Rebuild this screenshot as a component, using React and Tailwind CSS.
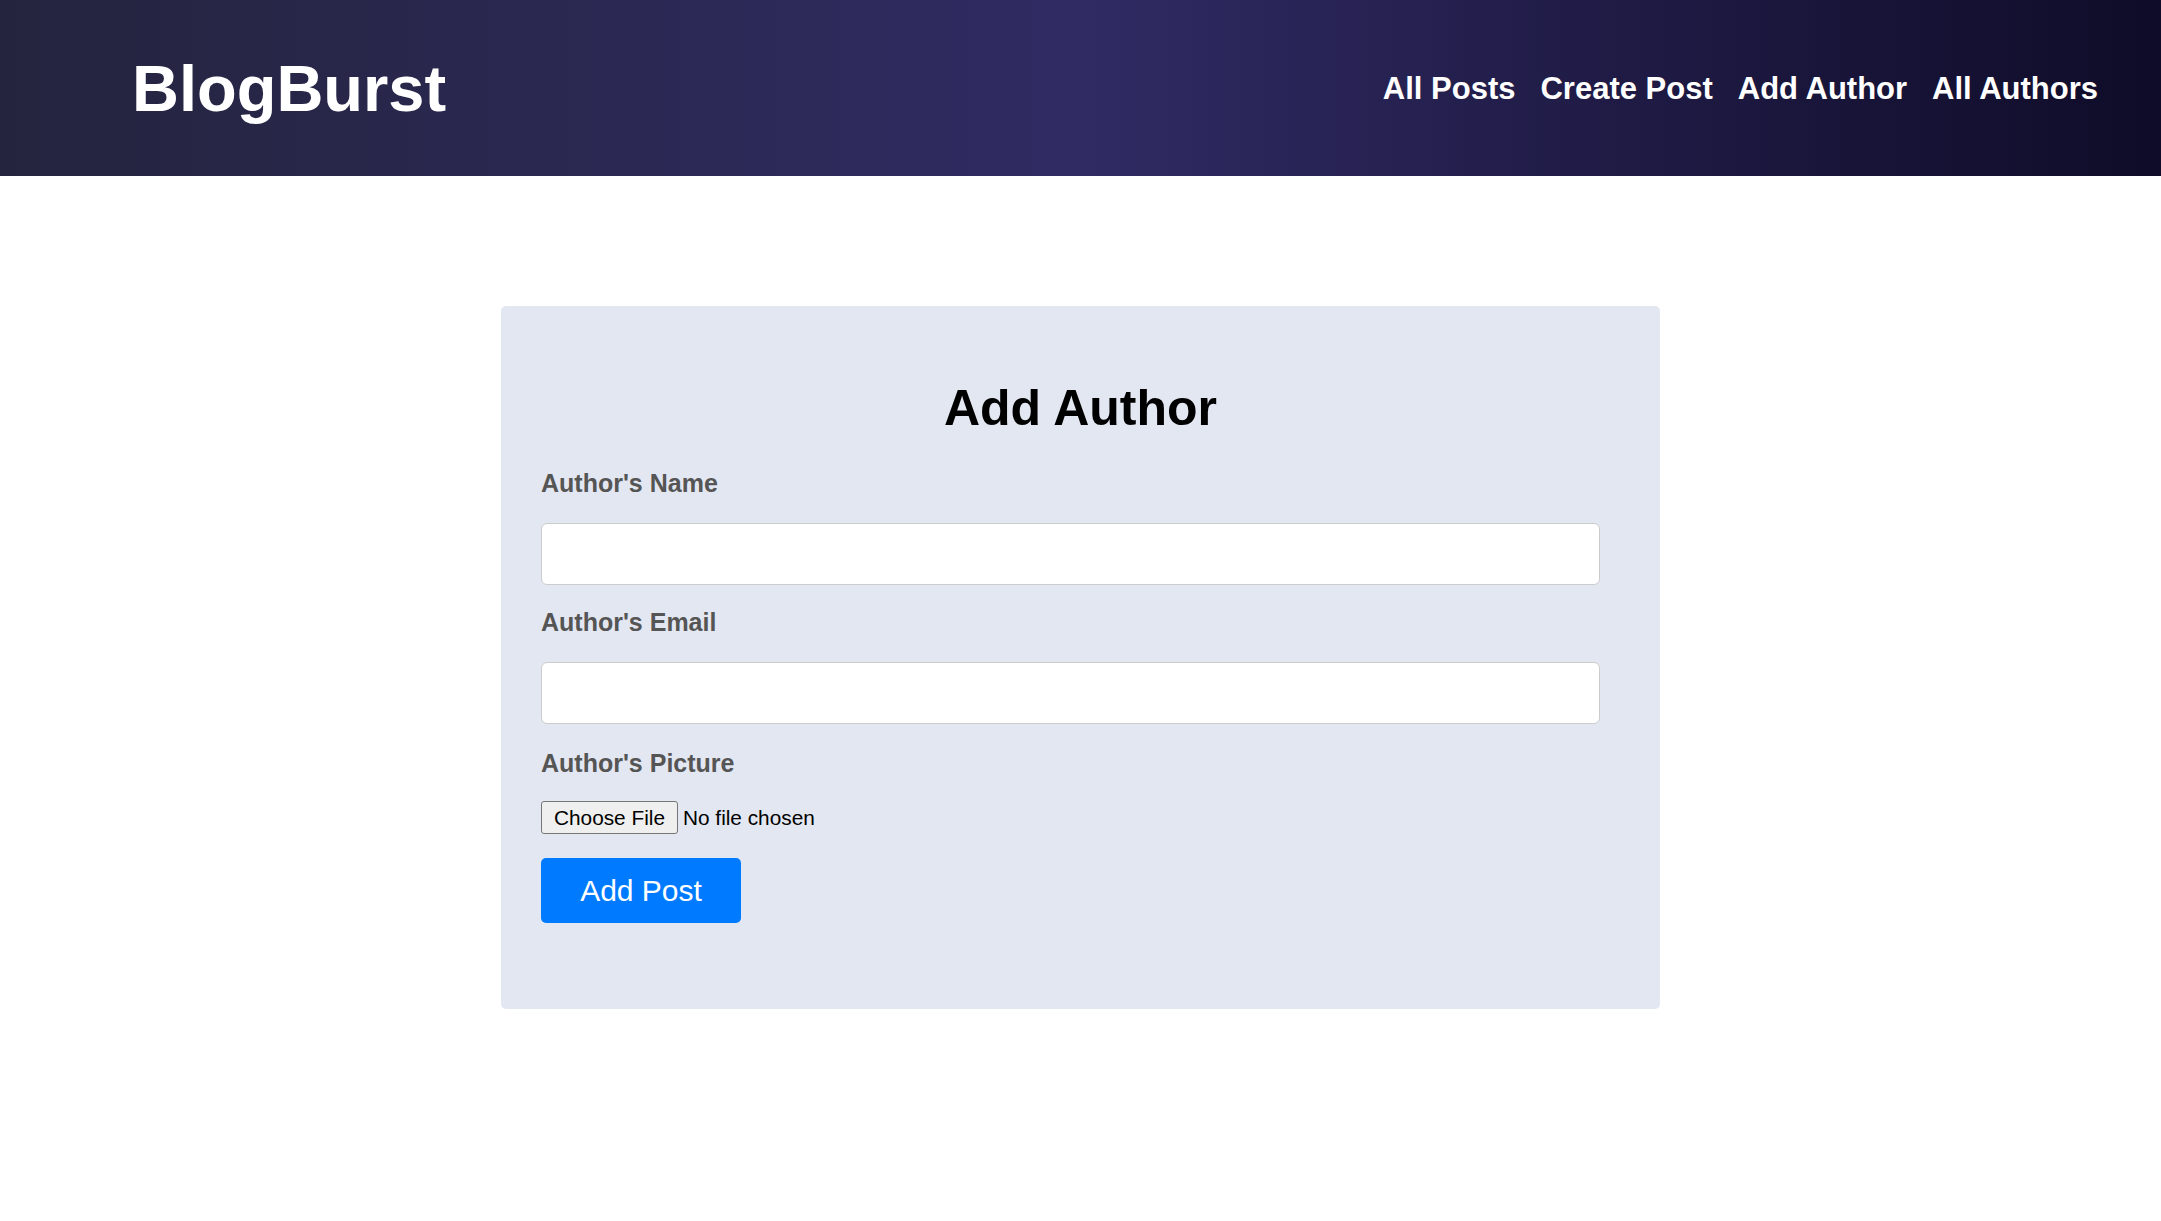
import React, { useState } from "react";

const navLinks = ["All Posts", "Create Post", "Add Author", "All Authors"];

const Header = () => (
  <header className="h-[176px] flex items-center justify-between pl-[132px] pr-[63px] bg-gradient-to-r from-[#24243e] via-[#302b63] to-[#0f0c29]">
    <h1 className="text-[65px] font-bold text-white leading-none">BlogBurst</h1>
    <nav className="flex items-center gap-[25px]">
      {navLinks.map((link) => (
        <a key={link} href="#" className="text-[31px] font-bold text-white leading-none">
          {link}
        </a>
      ))}
    </nav>
  </header>
);

const Field = ({ label, type, value, onChange }) => (
  <div>
    <label className="block text-[25px] leading-[29px] font-bold text-[#555] mb-[25px]">
      {label}
    </label>
    <input
      type={type}
      value={value}
      onChange={(e) => onChange(e.target.value)}
      className="block w-[1059px] h-[62px] px-[12px] text-[20px] bg-white border border-[#ccc] rounded-[6px] outline-none"
    />
  </div>
);

const App = () => {
  const [name, setName] = useState("");
  const [email, setEmail] = useState("");

  return (
    <div className="min-h-screen bg-white font-['Liberation_Sans',Arial,sans-serif]">
      <Header />

      {/* Form card */}
      <main className="flex justify-center pt-[130px]">
        <div className="w-[1159px] bg-[#e3e7f1] rounded-[5px] px-[40px] pt-[74px] pb-[86px]">
          <h2 className="text-[50px] leading-[56px] font-bold text-black text-center mb-[33px]">
            Add Author
          </h2>

          <form onSubmit={(e) => e.preventDefault()}>
            <div className="mb-[23px]">
              <Field label="Author's Name" type="text" value={name} onChange={setName} />
            </div>
            <div className="mb-[25px]">
              <Field label="Author's Email" type="email" value={email} onChange={setEmail} />
            </div>

            <label className="block text-[25px] leading-[29px] font-bold text-[#555] mb-[23px]">
              Author's Picture
            </label>
            <input
              type="file"
              className="block h-[33px] text-[20.8px] text-black file:h-[33px] file:px-[12px] file:mr-[5px] file:bg-[#efefef] file:border file:border-solid file:border-[#767676] file:rounded-[3px] file:text-black file:text-[20.8px]"
            />

            <button
              type="submit"
              className="mt-[24px] w-[200px] h-[65px] bg-[#007bff] text-white text-[30px] rounded-[5px]"
            >
              Add Post
            </button>
          </form>
        </div>
      </main>
    </div>
  );
};

export default App;
